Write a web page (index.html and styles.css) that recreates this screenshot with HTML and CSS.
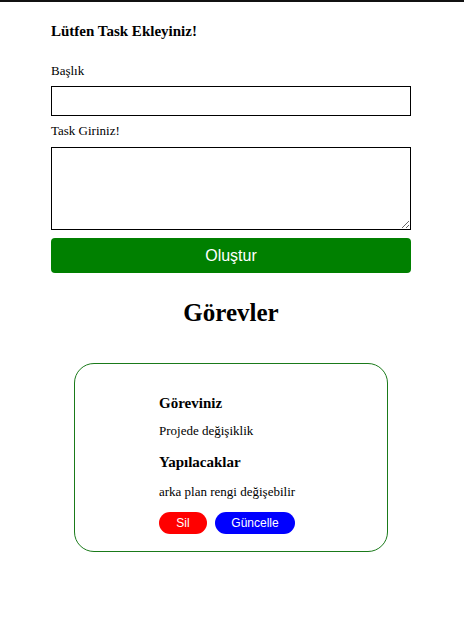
FILE: index.html
```html
<!DOCTYPE html>
<html lang="tr">
<head>
<meta charset="utf-8">
<title>Task</title>
<link rel="stylesheet" href="styles.css">
</head>
<body>
<main class="page">
  <form class="task-form">
    <h4 class="form-title">Lütfen Task Ekleyiniz!</h4>
    <label class="field-label field-label--first" for="baslik">Başlık</label>
    <input class="field-input" id="baslik" type="text">
    <label class="field-label field-label--second" for="task">Task Giriniz!</label>
    <textarea class="field-area" id="task"></textarea>
    <button class="submit-btn" type="button">Oluştur</button>
  </form>
  <h1 class="tasks-title">Görevler</h1>
  <section class="task-card">
    <div class="task-body">
      <h4 class="task-heading">Göreviniz</h4>
      <p class="task-text">Projede değişiklik</p>
      <h4 class="task-heading task-heading--second">Yapılacaklar</h4>
      <p class="task-text task-text--second">arka plan rengi değişebilir</p>
      <div class="task-actions">
        <button class="pill pill--delete" type="button">Sil</button>
        <button class="pill pill--update" type="button">Güncelle</button>
      </div>
    </div>
  </section>
</main>
</body>
</html>
```
FILE: styles.css
```css
html, body {
  background: #ffffff;
}
body {
  margin: 0;
  padding: 0 2px 0 0;
  border-top: 2px solid #111111;
  font-family: "Liberation Serif", "Times New Roman", serif;
  color: #000000;
}
.page {
  width: 360px;
  margin: 0 auto;
  padding-top: 21px;
}
.task-form {
  display: flex;
  flex-direction: column;
}
.form-title {
  margin: 0 0 23px;
  font-size: 15px;
  line-height: 17px;
  font-weight: bold;
}
.field-label {
  display: block;
  font-size: 13px;
  line-height: 15px;
}
.field-label--first {
  margin-bottom: 8px;
}
.field-label--second {
  margin-top: 7px;
  margin-bottom: 9px;
}
.field-input {
  box-sizing: border-box;
  width: 100%;
  height: 30px;
  margin: 0;
  border: 1px solid #000000;
  border-radius: 0;
  padding: 2px 4px;
  font: 13px "Liberation Serif", serif;
}
.field-area {
  box-sizing: border-box;
  width: 100%;
  height: 83px;
  margin: 0;
  border: 1px solid #000000;
  border-radius: 0;
  padding: 2px 4px;
  font: 13px "Liberation Serif", serif;
}
.submit-btn {
  margin-top: 8px;
  height: 35px;
  border: none;
  border-radius: 4px;
  background: #008000;
  color: #ffffff;
  font-family: "Liberation Sans", Arial, sans-serif;
  font-size: 16px;
  padding: 0;
}
.tasks-title {
  margin: 25px 0 36px;
  text-align: center;
  font-size: 25px;
  line-height: 29px;
  font-weight: bold;
}
.task-card {
  width: 314px;
  box-sizing: border-box;
  margin: 0 auto;
  border: 1px solid #1a7a1a;
  border-radius: 20px;
  padding: 31px 0 17px 84px;
}
.task-heading {
  margin: 0;
  font-size: 15px;
  line-height: 17px;
  font-weight: bold;
}
.task-heading--second {
  margin-top: 16px;
}
.task-text {
  margin: 11px 0 0;
  font-size: 13px;
  line-height: 15px;
}
.task-text--second {
  margin-top: 13px;
}
.task-actions {
  display: flex;
  gap: 8px;
  margin-top: 13px;
}
.pill {
  height: 22px;
  border: none;
  border-radius: 11px;
  color: #ffffff;
  font-family: "Liberation Sans", Arial, sans-serif;
  font-size: 12px;
  padding: 0;
}
.pill--delete {
  width: 48px;
  background: #ff0000;
}
.pill--update {
  width: 80px;
  background: #0000ff;
}
```
